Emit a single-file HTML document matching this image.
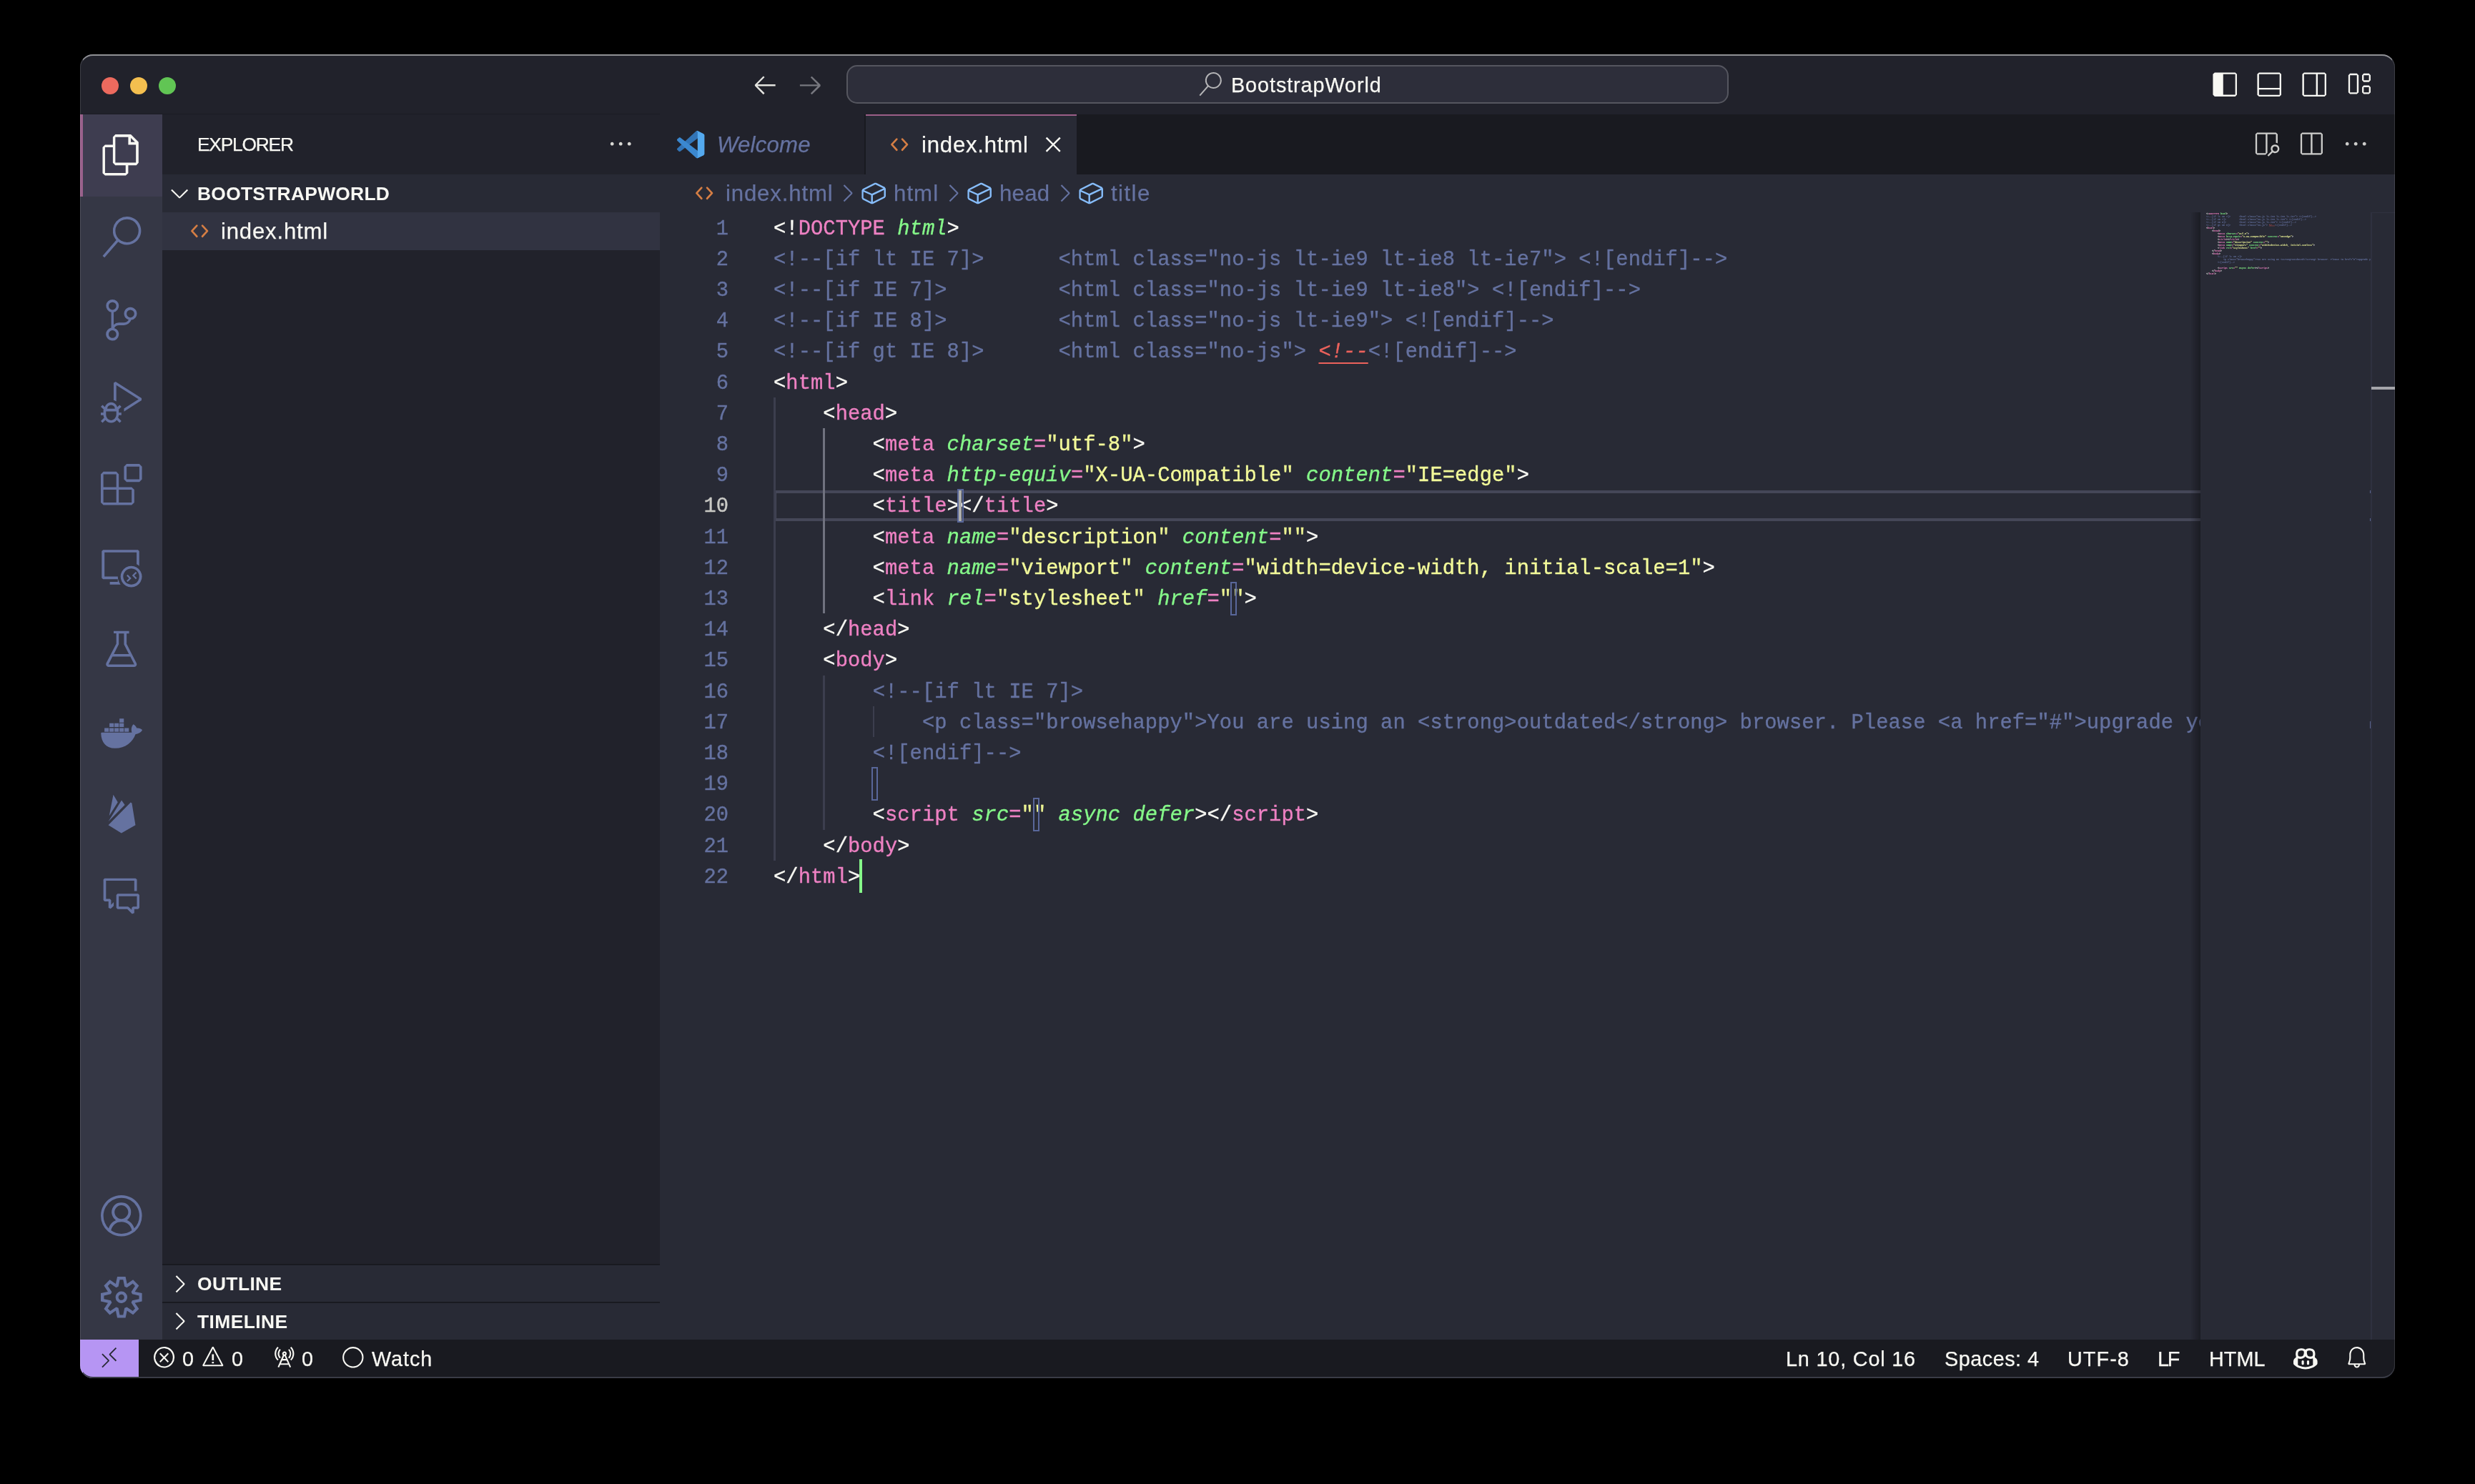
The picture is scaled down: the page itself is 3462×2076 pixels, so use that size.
<!DOCTYPE html>
<html><head><meta charset="utf-8"><title>index.html — BootstrapWorld</title>
<style>
html,body{margin:0;padding:0;background:#000;}
body{width:3462px;height:2076px;position:relative;overflow:hidden;font-family:"Liberation Sans",sans-serif;}
.t{position:absolute;white-space:pre;}
.t,.code,.ln{will-change:transform;}
.i{position:absolute;display:block;overflow:visible;}
.r{position:absolute;}
#win{position:absolute;left:112px;top:76px;width:3238px;height:1852px;border-radius:18px;overflow:hidden;background:#282A35;}
#win>*{margin-left:-112px;margin-top:-76px;}
#winborder{position:absolute;left:112px;top:76px;width:3238px;height:1852px;border-radius:18px;box-sizing:border-box;border:1px solid rgba(255,255,255,0.13);border-top:2px solid rgba(255,255,255,0.50);border-bottom:2px solid #3A3C46;pointer-events:none;}
.code,.ln{-webkit-text-stroke:0.35px currentColor;}
.code{position:absolute;white-space:pre;font-family:"Liberation Mono",monospace;font-size:28.8px;line-height:43.2px;height:43.2px;color:#F8F8F3;letter-spacing:0.047px;}
.code i{font-style:italic;}
.c{color:#6572A0}.p{color:#EE81C3}.g{color:#85F789;font-style:italic}.y{color:#F3FA9A}.q{color:#EBF292}
.e{color:#EC625C;font-style:italic;text-decoration:underline;text-decoration-thickness:2.4px;text-underline-offset:7px}
.ln{position:absolute;font-family:"Liberation Mono",monospace;font-size:28.8px;line-height:43.2px;color:#6572A0;text-align:right;width:100px;}
</style></head><body>
<div id="win">

<div class="r" style="left:112.0px;top:76.0px;width:3238.0px;height:84.0px;background:#21222B;"></div>
<div class="r" style="left:112.0px;top:160.0px;width:115.2px;height:1714.0px;background:#353745;"></div>
<div class="r" style="left:227.2px;top:160.0px;width:695.8px;height:1714.0px;background:#21222B;"></div>
<div class="r" style="left:923.0px;top:160.0px;width:2427.0px;height:84.0px;background:#191A20;"></div>
<div class="r" style="left:923.0px;top:244.0px;width:2427.0px;height:1630.0px;background:#282A35;"></div>
<div class="r" style="left:112.0px;top:1874.0px;width:3238.0px;height:53.0px;background:#191A20;"></div>
<div class="r" style="left:141.8px;top:108.0px;width:24.0px;height:24.0px;background:#EC6A5E;border-radius:50%;"></div>
<div class="r" style="left:181.8px;top:108.0px;width:24.0px;height:24.0px;background:#F4BF4F;border-radius:50%;"></div>
<div class="r" style="left:221.8px;top:108.0px;width:24.0px;height:24.0px;background:#61C554;border-radius:50%;"></div>
<svg class="i" style="left:1051.1px;top:99.3px;" width="38.4" height="38.4" viewBox="0 0 16 16"><path fill="#E4E4E0" fill-rule="evenodd" d="M6.99 3.09 2.03 8.11V8.8L6.99 13.81L7.73 13.07L3.57 8.96H14.03V7.95H3.57L7.73 3.79Z"/></svg>
<svg class="i" style="left:1113.6px;top:99.3px;" width="38.4" height="38.4" viewBox="0 0 16 16"><path fill="#77787F" fill-rule="evenodd" d="M9.01 13.87 14.03 8.91V8.16L9.01 3.2L8.27 3.89L12.43 8.05H2.03V9.01H12.43L8.27 13.17Z"/></svg>
<div class="r" style="left:1183.5px;top:90.8px;width:1234.0px;height:54.6px;background:#2D2E3A;box-sizing:border-box;border:2px solid #55565F;border-radius:15px;"></div>
<svg class="i" style="left:1676.3px;top:100.6px;" width="33.6" height="33.6" viewBox="0 0 16 16"><path fill="#B4B4B6" fill-rule="evenodd" d="M10.19 0Q8.53 0 7.17 0.88Q5.81 1.76 5.15 3.25Q4.48 4.75 4.72 6.35Q4.96 7.95 6.03 9.12L0.69 15.25L1.44 15.89L6.77 9.81Q8.21 10.93 10 10.99Q11.79 11.04 13.28 10.03Q14.77 9.01 15.36 7.31Q15.95 5.6 15.41 3.87Q14.88 2.13 13.41 1.07Q11.95 0 10.19 0ZM10.19 9.97Q8.96 9.97 7.92 9.39Q6.88 8.8 6.27 7.76Q5.65 6.72 5.65 5.49Q5.65 4.27 6.27 3.23Q6.88 2.19 7.92 1.6Q8.96 1.01 10.19 1.01Q11.41 1.01 12.43 1.6Q13.44 2.19 14.05 3.23Q14.67 4.27 14.67 5.49Q14.67 6.72 14.05 7.76Q13.44 8.8 12.43 9.41Q11.41 10.03 10.19 10.03Z"/></svg>
<div class="t" style="left:1721.8px;top:98.1px;font-size:28.8px;line-height:43.2px;color:#F8F8F3;letter-spacing:0.911px;-webkit-text-stroke:0.25px currentColor;">BootstrapWorld</div>
<svg class="i" style="left:3092.8px;top:98.5px;" width="38.4" height="38.4" viewBox="0 0 16 16"><path fill="#F8F8F3" fill-rule="evenodd" d="M2.03 1.01 1.01 1.97V13.97L2.03 14.99H14.03L14.99 13.97V1.97L14.03 1.01ZM14.03 13.97H6.99V1.97H14.03Z"/></svg>
<svg class="i" style="left:3155.2px;top:98.5px;" width="38.4" height="38.4" viewBox="0 0 16 16"><path fill="#F8F8F3" fill-rule="evenodd" d="M2.03 1.01 1.01 2.03V14.03L2.03 14.99H14.03L14.99 14.03V2.03L14.03 1.01ZM2.03 10.03V2.03H14.03V10.03ZM2.03 10.99H14.03V14.03H2.03Z"/></svg>
<svg class="i" style="left:3217.6px;top:98.5px;" width="38.4" height="38.4" viewBox="0 0 16 16"><path fill="#F8F8F3" fill-rule="evenodd" d="M2.03 1.01 1.01 2.03V14.03L2.03 14.99H14.03L14.99 14.03V2.03L14.03 1.01ZM2.03 14.03V2.03H9.01V14.03ZM10.03 14.03V2.03H14.03V14.03Z"/></svg>
<svg class="i" style="left:3280.1px;top:98.2px;" width="38.4" height="38.4" viewBox="0 0 16 16"><path fill="#F8F8F3" fill-rule="evenodd" d="M2.99 1.97 2.03 2.99V13.01L2.99 13.97H6.99L8 13.01V2.99L6.99 1.97ZM2.99 13.01V2.99H6.99V13.01ZM10.03 2.99 10.99 1.97H14.03L14.99 2.99V5.97L14.03 6.99H10.99L10.03 5.97ZM10.99 2.99V5.97H14.03V2.99ZM10.03 9.97 10.99 9.01H14.03L14.99 9.97V13.01L14.03 13.97H10.99L10.03 13.01ZM10.99 9.97V13.01H14.03V9.97Z"/></svg>
<div class="r" style="left:112.0px;top:159.0px;width:811.0px;height:1.0px;background:#1B1C24;"></div>
<div class="r" style="left:112.0px;top:160.0px;width:115.2px;height:115.2px;background:#3E3D50;"></div>
<div class="r" style="left:112.0px;top:160.0px;width:4.0px;height:115.2px;background:#99608B;"></div>
<svg class="i" style="left:140.8px;top:188.2px;" width="57.6" height="57.6" viewBox="0 0 16 16"><path fill="#F8F8F3" fill-rule="evenodd" d="M11.68 0H5.65L4.69 1.01V4H1.65L0.69 5.01V15.04L1.65 16H9.71L10.67 15.04V12H13.81L14.67 11.04V2.99ZM11.68 1.39 13.28 2.99H11.68ZM9.65 14.99H1.65V5.01H4.69V11.04L5.65 12H9.65ZM13.65 10.99H5.65V1.01H10.67V4H13.65Z"/></svg>
<svg class="i" style="left:140.8px;top:303.4px;" width="57.6" height="57.6" viewBox="0 0 16 16"><path fill="#6572A0" fill-rule="evenodd" d="M10.19 0Q8.53 0 7.17 0.88Q5.81 1.76 5.15 3.25Q4.48 4.75 4.72 6.35Q4.96 7.95 6.03 9.12L0.69 15.25L1.44 15.89L6.77 9.81Q8.21 10.93 10 10.99Q11.79 11.04 13.28 10.03Q14.77 9.01 15.36 7.31Q15.95 5.6 15.41 3.87Q14.88 2.13 13.41 1.07Q11.95 0 10.19 0ZM10.19 9.97Q8.96 9.97 7.92 9.39Q6.88 8.8 6.27 7.76Q5.65 6.72 5.65 5.49Q5.65 4.27 6.27 3.23Q6.88 2.19 7.92 1.6Q8.96 1.01 10.19 1.01Q11.41 1.01 12.43 1.6Q13.44 2.19 14.05 3.23Q14.67 4.27 14.67 5.49Q14.67 6.72 14.05 7.76Q13.44 8.8 12.43 9.41Q11.41 10.03 10.19 10.03Z"/></svg>
<svg class="i" style="left:140.8px;top:418.6px;" width="57.6" height="57.6" viewBox="0 0 16 16"><path fill="#6572A0" fill-rule="evenodd" d="M14.03 5.49Q14.03 4.8 13.65 4.19Q13.28 3.57 12.64 3.25Q12 2.93 11.31 2.99Q10.61 3.04 10.03 3.47Q9.44 3.89 9.2 4.56Q8.96 5.23 9.07 5.92Q9.17 6.61 9.65 7.12Q10.13 7.63 10.83 7.84Q10.56 8.37 10.08 8.67Q9.6 8.96 9.01 8.96H7.04Q5.87 8.96 5.01 9.76V4.91Q5.97 4.75 6.53 3.97Q7.09 3.2 7.01 2.24Q6.93 1.28 6.21 0.64Q5.49 0 4.53 0Q3.57 0 2.85 0.64Q2.13 1.28 2.05 2.24Q1.97 3.2 2.53 3.97Q3.09 4.75 4.05 4.91V10.99Q3.09 11.2 2.51 11.95Q1.92 12.69 2 13.65Q2.08 14.61 2.75 15.28Q3.41 15.95 4.37 16Q5.33 16.05 6.08 15.47Q6.83 14.88 6.99 13.92Q7.15 12.96 6.67 12.16Q6.19 11.36 5.23 11.09Q5.49 10.56 5.97 10.27Q6.45 9.97 7.04 9.97H9.01Q9.97 9.97 10.75 9.41Q11.52 8.85 11.84 7.95Q12.75 7.84 13.39 7.12Q14.03 6.4 14.03 5.49ZM3.04 2.51Q3.04 1.87 3.47 1.44Q3.89 1.01 4.53 1.01Q5.17 1.01 5.6 1.44Q6.03 1.87 6.03 2.48Q6.03 3.09 5.6 3.55Q5.17 4 4.53 4Q3.89 4 3.47 3.55Q3.04 3.09 3.04 2.51ZM6.03 13.44Q6.03 14.08 5.6 14.51Q5.17 14.93 4.53 14.93Q3.89 14.93 3.47 14.51Q3.04 14.08 3.04 13.47Q3.04 12.85 3.47 12.4Q3.89 11.95 4.53 11.95Q5.17 11.95 5.6 12.4Q6.03 12.85 6.03 13.44ZM11.52 6.99Q10.88 6.99 10.45 6.53Q10.03 6.08 10.03 5.47Q10.03 4.85 10.45 4.43Q10.88 4 11.49 4Q12.11 4 12.56 4.43Q13.01 4.85 13.01 5.47Q13.01 6.08 12.56 6.53Q12.11 6.99 11.52 6.99Z"/></svg>
<svg class="i" style="left:140.8px;top:533.8px;" width="57.6" height="57.6" viewBox="0 0 16 16"><path fill="#6572A0" fill-rule="evenodd" d="M7.31 9.01 6.4 9.87Q6.19 9.07 5.52 8.53Q4.85 8 4 8Q3.15 8 2.48 8.53Q1.81 9.07 1.6 9.87L0.69 9.01L0 9.71L1.17 10.83L1.01 10.99V12H0V13.01H1.01V13.07Q1.07 13.55 1.28 14.03L0 15.31L0.69 16L1.81 14.88Q2.19 15.41 2.77 15.71Q3.36 16 4 16Q4.64 16 5.23 15.71Q5.81 15.41 6.19 14.88L7.31 16L8 15.31L6.72 13.97Q6.93 13.55 6.99 13.01V12.96H8V12H6.99V10.99L6.88 10.83L8 9.71ZM4 9.01Q4.64 9.01 5.07 9.44Q5.49 9.87 5.49 10.51H2.51Q2.51 9.87 2.93 9.44Q3.36 9.01 4 9.01ZM6.03 13.01Q5.92 13.81 5.36 14.37Q4.8 14.93 4 14.99Q3.2 14.93 2.64 14.37Q2.08 13.81 2.03 13.01V11.52H6.03ZM15.84 6.4V7.25L9.01 11.57V10.4L14.67 6.83L6.03 1.33V7.63Q5.55 7.31 5.01 7.15V0.43L5.76 0Z"/></svg>
<svg class="i" style="left:140.8px;top:649.0px;" width="57.6" height="57.6" viewBox="0 0 16 16"><path fill="#6572A0" fill-rule="evenodd" d="M9.01 1.01 10.03 0H14.99L16 1.01V5.97L14.99 6.99H10.03L9.01 5.97ZM10.03 1.01V5.97H14.99V1.01ZM0 9.97V4L1.01 2.99H6.03L6.99 4V9.01H12L13.01 9.97V14.99L12 16H1.01L0 14.99ZM6.03 9.01V4H1.01V9.01ZM6.03 9.97H1.01V14.99H6.03ZM6.99 14.99H12V9.97H6.99Z"/></svg>
<svg class="i" style="left:140.8px;top:764.2px;" width="57.6" height="57.6" viewBox="0 0 16 16"><path fill="#6572A0" fill-rule="evenodd" d="M0.91 1.44H14.45L14.93 1.92V7.68Q14.45 7.31 13.92 7.04V2.45H1.44V11.84H6.61Q6.61 13.55 7.68 14.93H3.52V13.92H6.61V12.85H0.91L0.37 12.37V1.92ZM11.84 7.68Q10.72 7.68 9.76 8.24Q8.8 8.8 8.24 9.76Q7.68 10.72 7.68 11.84Q7.68 12.96 8.24 13.92Q8.8 14.88 9.76 15.44Q10.72 16 11.84 16Q12.96 16 13.92 15.44Q14.88 14.88 15.44 13.92Q16 12.96 16 11.84Q16 10.72 15.44 9.76Q14.88 8.8 13.92 8.24Q12.96 7.68 11.84 7.68ZM11.84 14.93Q10.99 14.93 10.27 14.53Q9.55 14.13 9.12 13.41Q8.69 12.69 8.69 11.84Q8.69 10.99 9.12 10.27Q9.55 9.55 10.27 9.12Q10.99 8.69 11.84 8.69Q12.69 8.69 13.41 9.12Q14.13 9.55 14.53 10.27Q14.93 10.99 14.93 11.84Q14.93 12.69 14.53 13.41Q14.13 14.13 13.41 14.53Q12.69 14.93 11.84 14.93ZM13.55 12.85 12.16 11.41 13.55 9.97 14.03 10.45 13.01 11.41 14.03 12.43ZM10.03 11.52 10.99 12.48 10.03 13.49 10.45 13.92 11.89 12.48 10.45 11.04Z"/></svg>
<svg class="i" style="left:140.8px;top:879.4px;" width="57.6" height="57.6" viewBox="0 0 16 16"><path fill="#6572A0" fill-rule="evenodd" d="M13.87 13.55 10.03 6.03V2.03H10.99V1.01H5.01V1.97H6.03V5.97L2.08 13.55Q1.87 14.08 2.16 14.53Q2.45 14.99 2.99 14.99H13.01Q13.55 14.99 13.84 14.53Q14.13 14.08 13.87 13.55ZM6.88 6.4 6.99 6.19V2.03H9.01V6.24L10.93 10.03H5.07ZM2.99 14.03 4.53 10.99H11.47L13.01 14.03Z"/></svg>
<svg class="i" style="left:140.8px;top:994.6px;" width="57.6" height="57.6" viewBox="0 0 24 24"><path fill="#6572A0" fill-rule="evenodd" d="M0.1 12.9Q0.1 12.4 0.6 12.4H18.1C17.6 11 17.7 8.9 19 7.6C20 8.2 20.7 9 20.9 9.8C22 9.6 23.4 10 24.2 10.9C23.6 12 22.3 13 20.2 13.4C18.6 17.8 14.6 21.6 8.2 21.6C3 21.6 0.3 18 0.1 12.9ZM2.13 9.8h2.55v2.2h-2.55ZM5.05 9.8h2.55v2.2h-2.55ZM7.97 9.8h2.55v2.2h-2.55ZM10.89 9.8h2.55v2.2h-2.55ZM13.81 9.8h2.55v2.2h-2.55ZM5.05 6.98h2.55v2.2h-2.55ZM7.97 6.98h2.55v2.2h-2.55ZM10.89 6.98h2.55v2.2h-2.55ZM10.89 4.3h2.55v2.25h-2.55Z"/></svg>
<svg class="i" style="left:140.8px;top:1109.8px;" width="57.6" height="57.6" viewBox="0 0 24 24"><path fill="#6572A0" fill-rule="evenodd" d="M7.3 0.7 9.9 5.1 4.9 13ZM4.4 16.4 12.1 4 14 6.7ZM4.4 18.4 17.4 5.2 18.1 5.6 20.2 18.4 12 23.1Z"/></svg>
<svg class="i" style="left:140.8px;top:1225.0px;" width="57.6" height="57.6" viewBox="0 0 16 16"><path fill="#6572A0" fill-rule="evenodd" d="M4 11.31 5.01 10.29V11.73L3.84 12.85L2.99 12.48V9.97H1.49L1.01 9.49V1.49L1.49 1.01H13.49L14.03 1.49V5.97H13.01V1.97H2.03V9.01H3.52L4 9.49ZM10.29 13.01 12.16 14.83 13.01 14.51V13.01H14.51L14.99 12.48V7.52L14.51 6.99H6.51L6.03 7.52V12.48L6.51 13.01ZM10.51 12H6.99V8H14.03V12H12.48L12 12.48V13.28L10.83 12.16Z"/></svg>
<svg class="i" style="left:140.8px;top:1672.4px;" width="57.6" height="57.6" viewBox="0 0 16 16"><path fill="#6572A0" fill-rule="evenodd" d="M16 8Q16 5.81 14.93 3.97Q13.87 2.13 12.03 1.07Q10.19 0 8 0Q5.81 0 3.97 1.07Q2.13 2.13 1.07 3.97Q0 5.81 0 8Q0 9.76 0.75 11.36Q1.49 12.96 2.83 14.08L3.52 14.61Q5.55 16 8 16Q10.45 16 12.48 14.61L13.23 14.08Q14.51 12.96 15.25 11.36Q16 9.76 16 8ZM8 14.99Q5.81 14.99 4 13.71L4.05 13.33Q4.21 12.8 4.48 12.35Q4.75 11.89 5.12 11.52Q5.49 11.15 5.92 10.88Q6.35 10.61 6.91 10.48Q7.47 10.35 8 10.35Q8.8 10.35 9.57 10.64Q10.35 10.93 10.91 11.49Q11.47 12.05 11.79 12.8Q11.95 13.23 12.05 13.71Q10.24 14.99 8 14.99ZM5.55 7.57Q5.33 7.09 5.33 6.56Q5.33 6.03 5.55 5.55Q5.76 5.07 6.11 4.72Q6.45 4.37 6.93 4.13Q7.41 3.89 8 3.89Q8.59 3.89 9.04 4.11Q9.49 4.32 9.87 4.69Q10.24 5.07 10.45 5.55Q10.67 6.03 10.67 6.59Q10.67 7.15 10.45 7.6Q10.24 8.05 9.87 8.43Q9.49 8.8 9.01 9.01Q8 9.44 6.93 9.01Q6.51 8.8 6.13 8.43Q5.76 8.05 5.55 7.57ZM12.96 12.91Q12.96 12.91 12.96 12.85V12.8Q12.75 12.05 12.29 11.41Q11.84 10.77 11.2 10.29Q10.72 9.92 10.13 9.65Q10.4 9.49 10.61 9.28Q10.99 8.91 11.25 8.48Q11.79 7.63 11.73 6.56Q11.79 5.81 11.49 5.12Q11.2 4.43 10.67 3.89Q10.13 3.36 9.44 3.09Q8.75 2.83 7.97 2.83Q7.2 2.83 6.51 3.09Q5.81 3.36 5.31 3.89Q4.8 4.43 4.51 5.12Q4.21 5.81 4.21 6.56Q4.21 7.09 4.37 7.6Q4.53 8.11 4.75 8.48Q4.96 8.85 5.39 9.28Q5.6 9.49 5.87 9.71Q5.33 9.92 4.85 10.29Q4.21 10.77 3.76 11.41Q3.31 12.05 3.04 12.85V12.91Q2.08 11.95 1.55 10.67Q1.01 9.39 1.01 8Q1.01 6.08 1.95 4.48Q2.88 2.88 4.48 1.95Q6.08 1.01 8 1.01Q9.92 1.01 11.52 1.95Q13.12 2.88 14.05 4.48Q14.99 6.08 14.99 8Q14.99 9.39 14.48 10.67Q13.97 11.95 12.96 12.91Z"/></svg>
<svg class="i" style="left:140.8px;top:1786.4px;" width="57.6" height="57.6" viewBox="0 0 16 16"><path fill="#6572A0" fill-rule="evenodd" d="M13.23 5.81 16 6.4V9.6L13.23 10.19L14.83 12.53L12.53 14.77L10.19 13.23L9.6 16H6.4L5.81 13.23L3.47 14.83L1.23 12.53L2.77 10.19L0 9.6V6.4L2.77 5.81L1.23 3.47L3.47 1.17L5.81 2.77L6.4 0H9.6L10.19 2.77L12.53 1.17L14.83 3.47ZM12.21 9.23 14.88 8.69V7.36L12.21 6.77L11.84 5.92L13.33 3.63L12.43 2.67L10.13 4.21L9.23 3.84L8.69 1.17H7.36L6.83 3.84L5.97 4.21L3.68 2.67L2.72 3.63L4.27 5.92L3.89 6.77L1.23 7.36V8.69L3.89 9.23L4.27 10.08L2.72 12.37L3.68 13.33L5.97 11.79L6.83 12.16L7.36 14.83H8.69L9.23 12.16L10.13 11.79L12.43 13.33L13.33 12.37L11.84 10.08ZM6.72 6.08Q7.31 5.71 8 5.71Q8.96 5.71 9.63 6.37Q10.29 7.04 10.29 8Q10.29 8.8 9.76 9.44Q9.23 10.08 8.43 10.24Q7.63 10.4 6.91 10.03Q6.19 9.65 5.89 8.88Q5.6 8.11 5.81 7.33Q6.03 6.56 6.72 6.08ZM7.36 8.96Q7.68 9.12 8 9.12Q8.48 9.12 8.8 8.8Q9.12 8.48 9.12 8.03Q9.12 7.57 8.88 7.28Q8.64 6.99 8.24 6.91Q7.84 6.83 7.47 7.01Q7.09 7.2 6.93 7.57Q6.77 7.95 6.91 8.35Q7.04 8.75 7.36 8.96Z"/></svg>
<div class="t" style="left:275.8px;top:183.4px;font-size:26.4px;line-height:39.6px;color:#F8F8F3;letter-spacing:-1.255px;-webkit-text-stroke:0.25px currentColor;">EXPLORER</div>
<svg class="i" style="left:849.0px;top:182.4px;" width="38.4" height="38.4" viewBox="0 0 16 16"><path fill="#D8D8D4" fill-rule="evenodd" d="M4 8Q4 8.43 3.71 8.72Q3.41 9.01 2.99 9.01Q2.56 9.01 2.29 8.72Q2.03 8.43 2.03 8Q2.03 7.57 2.29 7.28Q2.56 6.99 2.99 6.99Q3.41 6.99 3.71 7.28Q4 7.57 4 8ZM9.01 8Q9.01 8.43 8.72 8.72Q8.43 9.01 8 9.01Q7.57 9.01 7.28 8.72Q6.99 8.43 6.99 8Q6.99 7.57 7.28 7.28Q7.57 6.99 8 6.99Q8.43 6.99 8.72 7.28Q9.01 7.57 9.01 8ZM14.03 8Q14.03 8.43 13.73 8.72Q13.44 9.01 13.01 9.01Q12.59 9.01 12.29 8.72Q12 8.43 12 8Q12 7.57 12.29 7.28Q12.59 6.99 13.01 6.99Q13.44 6.99 13.73 7.28Q14.03 7.57 14.03 8Z"/></svg>
<div class="r" style="left:227.2px;top:244.0px;width:695.8px;height:52.8px;background:#282A35;"></div>
<svg class="i" style="left:231.8px;top:251.2px;" width="38.4" height="38.4" viewBox="0 0 16 16"><path fill="#F8F8F3" fill-rule="evenodd" d="M8 10.08 12.32 5.71 12.96 6.35 8.27 10.99H7.68L2.99 6.35L3.63 5.71Z"/></svg>
<div class="t" style="left:275.8px;top:251.8px;font-size:26.4px;line-height:39.6px;color:#F8F8F3;letter-spacing:0.273px;font-weight:700;">BOOTSTRAPWORLD</div>
<div class="r" style="left:227.2px;top:296.8px;width:695.8px;height:52.8px;background:#313341;"></div>
<svg class="i" style="left:259.8px;top:303.8px;" width="38.4" height="38.4" viewBox="0 0 16 16"><path fill="none" stroke="#D57E44" stroke-width="1.1" stroke-linejoin="round" stroke-linecap="round" d="M6.4 4.85 3.5 8 6.4 11.15M9.6 4.85 12.5 8 9.6 11.15"/></svg>
<div class="t" style="left:309.0px;top:301.0px;font-size:31.2px;line-height:46.8px;color:#F8F8F3;letter-spacing:0.789px;-webkit-text-stroke:0.25px currentColor;">index.html</div>
<div class="r" style="left:227.2px;top:1768.4px;width:695.8px;height:52.8px;background:#282A35;box-sizing:border-box;border-top:2.4px solid #191A20;"></div>
<svg class="i" style="left:232.3px;top:1776.6px;" width="38.4" height="38.4" viewBox="0 0 16 16"><path fill="#F8F8F3" fill-rule="evenodd" d="M10.08 8 5.71 3.68 6.35 3.04 10.99 7.73V8.32L6.35 13.01L5.71 12.37Z"/></svg>
<div class="t" style="left:276.4px;top:1777.2px;font-size:26.4px;line-height:39.6px;color:#F8F8F3;letter-spacing:0.390px;font-weight:700;">OUTLINE</div>
<div class="r" style="left:227.2px;top:1821.2px;width:695.8px;height:52.8px;background:#282A35;box-sizing:border-box;border-top:2.4px solid #191A20;"></div>
<svg class="i" style="left:232.3px;top:1829.4px;" width="38.4" height="38.4" viewBox="0 0 16 16"><path fill="#F8F8F3" fill-rule="evenodd" d="M10.08 8 5.71 3.68 6.35 3.04 10.99 7.73V8.32L6.35 13.01L5.71 12.37Z"/></svg>
<div class="t" style="left:276.4px;top:1830.0px;font-size:26.4px;line-height:39.6px;color:#F8F8F3;letter-spacing:0.429px;font-weight:700;">TIMELINE</div>
<div class="r" style="left:923.0px;top:160.0px;width:288.0px;height:84.0px;background:#21222B;"></div>
<div class="r" style="left:1208.6px;top:160.0px;width:2.4px;height:84.0px;background:#191A20;"></div>
<svg class="i" style="left:946.8px;top:182.7px" width="38.4" height="38.4" viewBox="0 0 100 100"><path fill="#3274B6" d="M96.4614 10.7962L75.8569 0.875542C73.4719 -0.272773 70.6217 0.211611 68.75 2.08333L1.29858 63.5832C-0.515693 65.2373 -0.513607 68.0937 1.30308 69.7452L6.81272 74.754C8.29793 76.1042 10.5347 76.2036 12.1338 74.9905L93.3609 13.3699C96.086 11.3026 100 13.2462 100 16.6667V16.4275C100 14.0265 98.6246 11.8378 96.4614 10.7962Z"/><path fill="#3B88D0" d="M96.4614 89.2038L75.8569 99.1245C73.4719 100.273 70.6217 99.7884 68.75 97.9167L1.29858 36.4169C-0.515693 34.7627 -0.513607 31.9063 1.30308 30.2548L6.81272 25.246C8.29793 23.8958 10.5347 23.7964 12.1338 25.0095L93.3609 86.6301C96.086 88.6974 100 86.7538 100 83.3334V83.5726C100 85.9735 98.6246 88.1622 96.4614 89.2038Z"/><path fill="#54A9EE" d="M75.8578 99.1263C73.4721 100.274 70.6219 99.7885 68.75 97.9166C71.0564 100.223 75 98.5895 75 95.3278V4.67213C75 1.41039 71.0564 -0.223106 68.75 2.08329C70.6219 0.211402 73.4721 -0.273666 75.8578 0.873633L96.4587 10.7807C98.6234 11.8217 100 14.0112 100 16.4132V83.5871C100 85.9891 98.6234 88.1786 96.4586 89.2196L75.8578 99.1263Z"/></svg>
<div class="t" style="left:1002.8px;top:179.8px;font-size:31.2px;line-height:46.8px;color:#6572A0;letter-spacing:0.190px;-webkit-text-stroke:0.25px currentColor;font-style:italic;">Welcome</div>
<div class="r" style="left:1211.0px;top:160.0px;width:295.0px;height:84.0px;background:#282A35;"></div>
<div class="r" style="left:1211.0px;top:160.0px;width:295.0px;height:2.4px;background:#9B5E87;"></div>
<svg class="i" style="left:1239.3px;top:182.8px;" width="38.4" height="38.4" viewBox="0 0 16 16"><path fill="none" stroke="#D57E44" stroke-width="1.1" stroke-linejoin="round" stroke-linecap="round" d="M6.4 4.85 3.5 8 6.4 11.15M9.6 4.85 12.5 8 9.6 11.15"/></svg>
<div class="t" style="left:1288.6px;top:179.8px;font-size:31.2px;line-height:46.8px;color:#F8F8F3;letter-spacing:0.756px;-webkit-text-stroke:0.25px currentColor;">index.html</div>
<svg class="i" style="left:1453.6px;top:182.8px;" width="38.4" height="38.4" viewBox="0 0 16 16"><path fill="#F8F8F3" fill-rule="evenodd" d="M8 8.69 11.63 12.37 12.37 11.63 8.69 8 12.37 4.37 11.63 3.63 8 7.31 4.37 3.63 3.63 4.37 7.31 8 3.63 11.63 4.37 12.37Z"/></svg>
<svg class="i" style="left:3150.2px;top:182.9px;" width="38.4" height="38.4" viewBox="0 0 16 16"><path fill="#CDCDCB" fill-rule="evenodd" d="M2.99 1.01H14.03L14.99 1.97V7.31Q14.51 7.09 13.97 6.99V1.97H9.01V12.85L7.89 13.97H2.99L2.03 13.01V1.97ZM2.99 13.01H8V1.97H2.99ZM13.39 8Q12.75 8 12.21 8.37H12.16Q11.25 8.91 11.01 9.95Q10.77 10.99 11.36 11.89L9.01 14.24L9.71 14.93L12.05 12.59Q12.53 12.91 13.15 12.99Q13.76 13.07 14.32 12.85Q14.88 12.64 15.28 12.21Q15.68 11.79 15.87 11.23Q16.05 10.67 15.95 10.08Q15.84 9.49 15.49 9.01Q15.15 8.53 14.59 8.27Q14.03 8 13.39 8ZM13.6 12Q13.07 12.05 12.67 11.76Q12.27 11.47 12.08 11.07Q11.89 10.67 12 10.21Q12.11 9.76 12.43 9.44Q12.75 9.12 13.17 9.04Q13.6 8.96 14.03 9.12Q14.45 9.28 14.69 9.63Q14.93 9.97 14.96 10.37Q14.99 10.77 14.83 11.15Q14.67 11.52 14.35 11.73Q14.03 11.95 13.6 12Z"/></svg>
<svg class="i" style="left:3213.1px;top:182.9px;" width="38.4" height="38.4" viewBox="0 0 16 16"><path fill="#CDCDCB" fill-rule="evenodd" d="M14.03 1.01H2.99L2.03 1.97V13.01L2.99 13.97H14.03L14.99 13.01V1.97ZM8 13.01H2.99V1.97H8ZM14.03 13.01H9.01V1.97H14.03Z"/></svg>
<svg class="i" style="left:3275.5px;top:181.8px;" width="38.4" height="38.4" viewBox="0 0 16 16"><path fill="#CDCDCB" fill-rule="evenodd" d="M4 8Q4 8.43 3.71 8.72Q3.41 9.01 2.99 9.01Q2.56 9.01 2.29 8.72Q2.03 8.43 2.03 8Q2.03 7.57 2.29 7.28Q2.56 6.99 2.99 6.99Q3.41 6.99 3.71 7.28Q4 7.57 4 8ZM9.01 8Q9.01 8.43 8.72 8.72Q8.43 9.01 8 9.01Q7.57 9.01 7.28 8.72Q6.99 8.43 6.99 8Q6.99 7.57 7.28 7.28Q7.57 6.99 8 6.99Q8.43 6.99 8.72 7.28Q9.01 7.57 9.01 8ZM14.03 8Q14.03 8.43 13.73 8.72Q13.44 9.01 13.01 9.01Q12.59 9.01 12.29 8.72Q12 8.43 12 8Q12 7.57 12.29 7.28Q12.59 6.99 13.01 6.99Q13.44 6.99 13.73 7.28Q14.03 7.57 14.03 8Z"/></svg>
<svg class="i" style="left:965.6px;top:251.2px;" width="38.4" height="38.4" viewBox="0 0 16 16"><path fill="none" stroke="#D57E44" stroke-width="1.1" stroke-linejoin="round" stroke-linecap="round" d="M6.4 4.85 3.5 8 6.4 11.15M9.6 4.85 12.5 8 9.6 11.15"/></svg>
<div class="t" style="left:1014.7px;top:248.2px;font-size:31.2px;line-height:46.8px;color:#6572A0;letter-spacing:0.833px;-webkit-text-stroke:0.25px currentColor;">index.html</div>
<svg class="i" style="left:1166.3px;top:251.2px;" width="38.4" height="38.4" viewBox="0 0 16 16"><path fill="#6572A0" fill-rule="evenodd" d="M10.08 8 5.71 3.68 6.35 3.04 10.99 7.73V8.32L6.35 13.01L5.71 12.37Z"/></svg>
<svg class="i" style="left:1203.2px;top:251.2px;" width="38.4" height="38.4" viewBox="0 0 16 16"><path fill="#86BCF9" fill-rule="evenodd" d="M14.45 4.48 9.44 1.97H8.53L1.55 5.49L1.01 6.4V10.88L1.55 11.79L6.56 14.29H7.47L14.45 10.77L14.99 9.87V5.39ZM6.45 13.12 1.97 10.88V7.15L6.45 9.17ZM6.93 8.32 2.29 6.24 8.96 2.88 13.6 5.23ZM13.97 9.87 7.47 13.12V9.23L13.97 6.19Z"/></svg>
<div class="t" style="left:1250.0px;top:248.2px;font-size:31.2px;line-height:46.8px;color:#6572A0;letter-spacing:1.053px;-webkit-text-stroke:0.25px currentColor;">html</div>
<svg class="i" style="left:1314.3px;top:251.2px;" width="38.4" height="38.4" viewBox="0 0 16 16"><path fill="#6572A0" fill-rule="evenodd" d="M10.08 8 5.71 3.68 6.35 3.04 10.99 7.73V8.32L6.35 13.01L5.71 12.37Z"/></svg>
<svg class="i" style="left:1351.2px;top:251.2px;" width="38.4" height="38.4" viewBox="0 0 16 16"><path fill="#86BCF9" fill-rule="evenodd" d="M14.45 4.48 9.44 1.97H8.53L1.55 5.49L1.01 6.4V10.88L1.55 11.79L6.56 14.29H7.47L14.45 10.77L14.99 9.87V5.39ZM6.45 13.12 1.97 10.88V7.15L6.45 9.17ZM6.93 8.32 2.29 6.24 8.96 2.88 13.6 5.23ZM13.97 9.87 7.47 13.12V9.23L13.97 6.19Z"/></svg>
<div class="t" style="left:1397.7px;top:248.2px;font-size:31.2px;line-height:46.8px;color:#6572A0;letter-spacing:0.264px;-webkit-text-stroke:0.25px currentColor;">head</div>
<svg class="i" style="left:1469.5px;top:251.2px;" width="38.4" height="38.4" viewBox="0 0 16 16"><path fill="#6572A0" fill-rule="evenodd" d="M10.08 8 5.71 3.68 6.35 3.04 10.99 7.73V8.32L6.35 13.01L5.71 12.37Z"/></svg>
<svg class="i" style="left:1507.0px;top:251.2px;" width="38.4" height="38.4" viewBox="0 0 16 16"><path fill="#86BCF9" fill-rule="evenodd" d="M14.45 4.48 9.44 1.97H8.53L1.55 5.49L1.01 6.4V10.88L1.55 11.79L6.56 14.29H7.47L14.45 10.77L14.99 9.87V5.39ZM6.45 13.12 1.97 10.88V7.15L6.45 9.17ZM6.93 8.32 2.29 6.24 8.96 2.88 13.6 5.23ZM13.97 9.87 7.47 13.12V9.23L13.97 6.19Z"/></svg>
<div class="t" style="left:1553.5px;top:248.2px;font-size:31.2px;line-height:46.8px;color:#6572A0;letter-spacing:1.437px;-webkit-text-stroke:0.25px currentColor;">title</div>
<div class="r" style="left:1082.0px;top:685.9px;width:1996.0px;height:43.2px;background:transparent;box-sizing:border-box;border:4px solid #454758;border-right:none;"></div>
<div class="r" style="left:1082.3px;top:556.0px;width:2.4px;height:648.0px;background:#3C3E4E;"></div>
<div class="r" style="left:1151.2px;top:599.2px;width:2.4px;height:259.2px;background:#70727F;"></div>
<div class="r" style="left:1151.2px;top:944.8px;width:2.4px;height:216.0px;background:#3C3E4E;"></div>
<div class="r" style="left:1220.7px;top:988.0px;width:2.4px;height:43.2px;background:#3C3E4E;"></div>
<div class="r" style="left:923px;top:296.8px;width:2155px;height:1577.2px;overflow:hidden;">
<div class="ln" style="left:-4.5px;top:1.8px;color:#6572A0">1</div>
<div class="code" style="left:158.7px;top:1.8px">&lt;!<span class="p">DOCTYPE</span> <span class="g">html</span>&gt;</div>
<div class="ln" style="left:-4.5px;top:45.0px;color:#6572A0">2</div>
<div class="code" style="left:158.7px;top:45.0px"><span class="c">&lt;!--[if lt IE 7]&gt;      &lt;html class=&quot;no-js lt-ie9 lt-ie8 lt-ie7&quot;&gt; &lt;![endif]--&gt;</span></div>
<div class="ln" style="left:-4.5px;top:88.2px;color:#6572A0">3</div>
<div class="code" style="left:158.7px;top:88.2px"><span class="c">&lt;!--[if IE 7]&gt;         &lt;html class=&quot;no-js lt-ie9 lt-ie8&quot;&gt; &lt;![endif]--&gt;</span></div>
<div class="ln" style="left:-4.5px;top:131.4px;color:#6572A0">4</div>
<div class="code" style="left:158.7px;top:131.4px"><span class="c">&lt;!--[if IE 8]&gt;         &lt;html class=&quot;no-js lt-ie9&quot;&gt; &lt;![endif]--&gt;</span></div>
<div class="ln" style="left:-4.5px;top:174.6px;color:#6572A0">5</div>
<div class="code" style="left:158.7px;top:174.6px"><span class="c">&lt;!--[if gt IE 8]&gt;      &lt;html class=&quot;no-js&quot;&gt; </span><span class="e">&lt;!--</span><span class="c">&lt;![endif]--&gt;</span></div>
<div class="ln" style="left:-4.5px;top:217.8px;color:#6572A0">6</div>
<div class="code" style="left:158.7px;top:217.8px">&lt;<span class="p">html</span>&gt;</div>
<div class="ln" style="left:-4.5px;top:261.0px;color:#6572A0">7</div>
<div class="code" style="left:158.7px;top:261.0px">    &lt;<span class="p">head</span>&gt;</div>
<div class="ln" style="left:-4.5px;top:304.2px;color:#6572A0">8</div>
<div class="code" style="left:158.7px;top:304.2px">        &lt;<span class="p">meta</span> <span class="g">charset</span><span class="p">=</span><span class="q">&quot;</span><span class="y">utf-8</span><span class="q">&quot;</span>&gt;</div>
<div class="ln" style="left:-4.5px;top:347.4px;color:#6572A0">9</div>
<div class="code" style="left:158.7px;top:347.4px">        &lt;<span class="p">meta</span> <span class="g">http-equiv</span><span class="p">=</span><span class="q">&quot;</span><span class="y">X-UA-Compatible</span><span class="q">&quot;</span> <span class="g">content</span><span class="p">=</span><span class="q">&quot;</span><span class="y">IE=edge</span><span class="q">&quot;</span>&gt;</div>
<div class="ln" style="left:-4.5px;top:390.6px;color:#C9C9C5">10</div>
<div class="code" style="left:158.7px;top:390.6px">        &lt;<span class="p">title</span>&gt;&lt;/<span class="p">title</span>&gt;</div>
<div class="ln" style="left:-4.5px;top:433.8px;color:#6572A0">11</div>
<div class="code" style="left:158.7px;top:433.8px">        &lt;<span class="p">meta</span> <span class="g">name</span><span class="p">=</span><span class="q">&quot;</span><span class="y">description</span><span class="q">&quot;</span> <span class="g">content</span><span class="p">=</span><span class="q">&quot;</span><span class="y"></span><span class="q">&quot;</span>&gt;</div>
<div class="ln" style="left:-4.5px;top:477.0px;color:#6572A0">12</div>
<div class="code" style="left:158.7px;top:477.0px">        &lt;<span class="p">meta</span> <span class="g">name</span><span class="p">=</span><span class="q">&quot;</span><span class="y">viewport</span><span class="q">&quot;</span> <span class="g">content</span><span class="p">=</span><span class="q">&quot;</span><span class="y">width=device-width, initial-scale=1</span><span class="q">&quot;</span>&gt;</div>
<div class="ln" style="left:-4.5px;top:520.2px;color:#6572A0">13</div>
<div class="code" style="left:158.7px;top:520.2px">        &lt;<span class="p">link</span> <span class="g">rel</span><span class="p">=</span><span class="q">&quot;</span><span class="y">stylesheet</span><span class="q">&quot;</span> <span class="g">href</span><span class="p">=</span><span class="q">&quot;</span><span class="y"></span><span class="q">&quot;</span>&gt;</div>
<div class="ln" style="left:-4.5px;top:563.4px;color:#6572A0">14</div>
<div class="code" style="left:158.7px;top:563.4px">    &lt;/<span class="p">head</span>&gt;</div>
<div class="ln" style="left:-4.5px;top:606.6px;color:#6572A0">15</div>
<div class="code" style="left:158.7px;top:606.6px">    &lt;<span class="p">body</span>&gt;</div>
<div class="ln" style="left:-4.5px;top:649.8px;color:#6572A0">16</div>
<div class="code" style="left:158.7px;top:649.8px">        <span class="c">&lt;!--[if lt IE 7]&gt;</span></div>
<div class="ln" style="left:-4.5px;top:693.0px;color:#6572A0">17</div>
<div class="code" style="left:158.7px;top:693.0px">            <span class="c">&lt;p class=&quot;browsehappy&quot;&gt;You are using an &lt;strong&gt;outdated&lt;/strong&gt; browser. Please &lt;a href=&quot;#&quot;&gt;upgrade your browser&lt;/a&gt; to improve your experience.&lt;/p&gt;</span></div>
<div class="ln" style="left:-4.5px;top:736.2px;color:#6572A0">18</div>
<div class="code" style="left:158.7px;top:736.2px">        <span class="c">&lt;![endif]--&gt;</span></div>
<div class="ln" style="left:-4.5px;top:779.4px;color:#6572A0">19</div>
<div class="ln" style="left:-4.5px;top:822.6px;color:#6572A0">20</div>
<div class="code" style="left:158.7px;top:822.6px">        &lt;<span class="p">script</span> <span class="g">src</span><span class="p">=</span><span class="q">&quot;</span><span class="y"></span><span class="q">&quot;</span> <span class="g">async</span> <span class="g">defer</span>&gt;&lt;/<span class="p">script</span>&gt;</div>
<div class="ln" style="left:-4.5px;top:865.8px;color:#6572A0">21</div>
<div class="code" style="left:158.7px;top:865.8px">    &lt;/<span class="p">body</span>&gt;</div>
<div class="ln" style="left:-4.5px;top:909.0px;color:#6572A0">22</div>
<div class="code" style="left:158.7px;top:909.0px">&lt;/<span class="p">html</span>&gt;</div>
</div>
<div class="r" style="left:1720.8px;top:813.6px;width:9.1px;height:47.2px;background:transparent;box-sizing:border-box;border:2px solid #59679A;"></div>
<div class="r" style="left:1219.0px;top:1073.0px;width:9.1px;height:47.0px;background:transparent;box-sizing:border-box;border:2px solid #59679A;"></div>
<div class="r" style="left:1444.8px;top:1116.1px;width:9.1px;height:47.0px;background:transparent;box-sizing:border-box;border:2px solid #59679A;"></div>
<div class="r" style="left:1339.1px;top:684.2px;width:8.8px;height:46.4px;background:transparent;box-sizing:border-box;border:2px solid #59679A;"></div>
<div class="r" style="left:1340.9px;top:686.3px;width:4.6px;height:42.4px;background:#AEAFAD;"></div>
<div class="r" style="left:1201.8px;top:1202.2px;width:4.6px;height:47.0px;background:#85F789;"></div>
<div class="r" style="left:112.0px;top:1874.0px;width:81.6px;height:54.0px;background:#B695F3;"></div>
<svg class="i" style="left:135.7px;top:1882.9px;" width="33.6" height="33.6" viewBox="0 0 16 16"><path fill="#282A35" fill-rule="evenodd" d="M12.91 9.55 8.91 5.6 12.91 1.6 12.27 1.01 8 5.28V5.92L12.27 10.19ZM2.99 5.6 7.09 9.71 2.99 13.76 3.63 14.4 8 9.97V9.39L3.63 5.01Z"/></svg>
<svg class="i" style="left:212.7px;top:1882.1px;" width="33.6" height="33.6" viewBox="0 0 16 16"><path fill="#F8F8F3" fill-rule="evenodd" d="M8.59 1.01Q9.76 1.07 10.85 1.6Q11.95 2.13 12.8 2.99Q14.83 5.17 14.83 8.11Q14.83 10.4 13.23 12.48Q12.43 13.44 11.41 14.05Q10.4 14.67 9.23 14.88Q6.67 15.36 4.59 14.19Q3.52 13.6 2.72 12.69Q1.92 11.79 1.49 10.67Q1.07 9.55 0.99 8.32Q0.91 7.09 1.28 5.97Q2.08 3.52 4.11 2.19Q5.07 1.55 6.21 1.23Q7.36 0.91 8.59 1.01ZM9.12 13.92Q11.15 13.44 12.48 11.79Q13.81 9.97 13.71 8Q13.71 6.77 13.25 5.65Q12.8 4.53 12 3.68Q10.45 2.13 8.43 1.97Q7.41 1.92 6.4 2.16Q5.39 2.4 4.59 2.99Q2.88 4.27 2.27 6.35Q1.65 8.43 2.53 10.35Q3.41 12.27 5.23 13.28Q6.08 13.81 7.09 13.97Q8.11 14.13 9.12 13.92ZM7.89 7.52 10.29 5.01 10.99 5.71 8.59 8.21 10.99 10.72 10.29 11.41 7.89 8.91 5.49 11.41 4.8 10.72 7.2 8.21 4.8 5.71 5.49 5.01Z"/></svg>
<div class="t" style="left:255.3px;top:1880.0px;font-size:28.8px;line-height:43.2px;color:#F8F8F3;letter-spacing:-0.417px;-webkit-text-stroke:0.25px currentColor;">0</div>
<svg class="i" style="left:280.7px;top:1882.1px;" width="33.6" height="33.6" viewBox="0 0 16 16"><path fill="#F8F8F3" fill-rule="evenodd" d="M7.57 1.01H8.43L14.99 13.28L14.56 13.97H1.44L1.01 13.28ZM8 2.29 2.29 13.01H13.71ZM8.64 12V10.99H7.36V12ZM7.36 9.97V5.97H8.64V9.97Z"/></svg>
<div class="t" style="left:323.6px;top:1880.0px;font-size:28.8px;line-height:43.2px;color:#F8F8F3;-webkit-text-stroke:0.25px currentColor;">0</div>
<svg class="i" style="left:380.2px;top:1882.1px;" width="33.6" height="33.6" viewBox="0 0 16 16"><path fill="#F8F8F3" fill-rule="evenodd" d="M2.99 5.6Q2.99 4.48 3.41 3.47Q3.84 2.45 4.64 1.71L3.89 1.01Q2.99 1.92 2.48 3.09Q1.97 4.27 1.97 5.57Q1.97 6.88 2.48 8.05Q2.99 9.23 3.89 10.13L4.64 9.44Q3.84 8.69 3.41 7.68Q2.99 6.67 2.99 5.6ZM4.05 5.6Q4.05 6.45 4.4 7.28Q4.75 8.11 5.39 8.75L6.08 8.05Q5.6 7.57 5.33 6.93Q5.07 6.29 5.07 5.6Q5.07 4.91 5.33 4.27Q5.6 3.63 6.08 3.15L5.39 2.4Q4.75 3.04 4.4 3.87Q4.05 4.69 4.05 5.6ZM11.73 8.8 10.99 8.05Q11.52 7.57 11.79 6.93Q12.05 6.29 12.05 5.6Q12.05 4.91 11.79 4.27Q11.52 3.63 10.99 3.15L11.73 2.45Q12.32 3.09 12.67 3.92Q13.01 4.75 13.01 5.63Q13.01 6.51 12.67 7.33Q12.32 8.16 11.73 8.8ZM13.07 1.01 12.37 1.71Q13.12 2.45 13.55 3.47Q13.97 4.48 13.97 5.57Q13.97 6.67 13.55 7.68Q13.12 8.69 12.37 9.44L13.07 10.13Q13.97 9.23 14.48 8.05Q14.99 6.88 14.99 5.57Q14.99 4.27 14.48 3.09Q13.97 1.92 13.07 1.01ZM9.97 5.44Q10.03 5.97 9.76 6.4L9.49 6.61L12.91 14.35L12 14.77L11.25 13.01H5.71L4.91 14.77L4 14.35L7.41 6.61Q7.15 6.29 7.04 5.87Q6.93 5.44 7.12 5.01Q7.31 4.59 7.65 4.35Q8 4.11 8.4 4.08Q8.8 4.05 9.15 4.21Q9.49 4.37 9.73 4.69Q9.97 5.01 9.97 5.44ZM8.37 5.07Q8.27 5.12 8.16 5.23Q8.05 5.33 8.03 5.47Q8 5.6 8.05 5.73Q8.11 5.87 8.24 5.95Q8.37 6.03 8.53 6.03Q8.69 6.03 8.85 5.89Q9.01 5.76 9.01 5.57Q9.01 5.39 8.91 5.28Q8.8 5.17 8.67 5.12Q8.53 5.07 8.37 5.07ZM8.64 7.15H8.37L7.47 9.07H9.49ZM10.83 12.05 9.92 10.08H7.04L6.19 12.05Z"/></svg>
<div class="t" style="left:421.8px;top:1880.0px;font-size:28.8px;line-height:43.2px;color:#F8F8F3;-webkit-text-stroke:0.25px currentColor;">0</div>
<svg class="i" style="left:477.2px;top:1882.1px;" width="33.6" height="33.6" viewBox="0 0 16 16"><path fill="#F8F8F3" fill-rule="evenodd" d="M9.6 2.24Q8.8 1.97 8 1.97Q7.2 1.97 6.4 2.24Q5.65 2.4 4.96 2.83Q3.63 3.63 2.83 4.96Q2.4 5.65 2.19 6.43Q1.97 7.2 2 8.03Q2.03 8.85 2.19 9.6Q2.61 11.09 3.73 12.27Q4.32 12.8 4.99 13.2Q5.65 13.6 6.43 13.81Q7.2 14.03 8.03 14Q8.85 13.97 9.6 13.79Q10.35 13.6 11.04 13.17Q12.37 12.37 13.17 11.04Q13.6 10.35 13.76 9.6Q14.03 8.8 14 7.97Q13.97 7.15 13.76 6.4Q13.6 5.65 13.17 4.96Q12.8 4.32 12.21 3.79Q11.68 3.2 11.04 2.83Q10.35 2.4 9.6 2.24ZM14.03 11.52Q13.12 13.12 11.52 14.03Q10.72 14.51 9.84 14.75Q8.96 14.99 8 14.99Q7.04 14.99 6.16 14.75Q5.28 14.51 4.48 14.05Q3.68 13.6 3.04 12.96Q2.4 12.32 1.95 11.52Q1.49 10.72 1.25 9.84Q1.01 8.96 1.01 8Q1.01 7.04 1.25 6.16Q1.49 5.28 1.97 4.48Q2.88 2.88 4.48 1.97Q5.28 1.49 6.16 1.25Q7.04 1.01 8 1.01Q8.96 1.01 9.87 1.23Q11.63 1.76 12.93 3.07Q14.24 4.37 14.77 6.13Q14.99 7.04 14.99 8Q14.99 8.96 14.75 9.84Q14.51 10.72 14.03 11.52Z"/></svg>
<div class="t" style="left:520.0px;top:1880.0px;font-size:28.8px;line-height:43.2px;color:#F8F8F3;letter-spacing:0.962px;-webkit-text-stroke:0.25px currentColor;">Watch</div>
<div class="t" style="left:2497.8px;top:1880.0px;font-size:28.8px;line-height:43.2px;color:#F8F8F3;letter-spacing:0.815px;-webkit-text-stroke:0.25px currentColor;">Ln 10, Col 16</div>
<div class="t" style="left:2719.7px;top:1880.0px;font-size:28.8px;line-height:43.2px;color:#F8F8F3;letter-spacing:0.502px;-webkit-text-stroke:0.25px currentColor;">Spaces: 4</div>
<div class="t" style="left:2892.2px;top:1880.0px;font-size:28.8px;line-height:43.2px;color:#F8F8F3;letter-spacing:1.052px;-webkit-text-stroke:0.25px currentColor;">UTF-8</div>
<div class="t" style="left:3017.9px;top:1880.0px;font-size:28.8px;line-height:43.2px;color:#F8F8F3;letter-spacing:-2.310px;-webkit-text-stroke:0.25px currentColor;">LF</div>
<div class="t" style="left:3089.5px;top:1880.0px;font-size:28.8px;line-height:43.2px;color:#F8F8F3;letter-spacing:0.067px;-webkit-text-stroke:0.25px currentColor;">HTML</div>
<svg class="i" style="left:3207.9px;top:1882.1px;" width="33.6" height="33.6" viewBox="0 0 16 16"><path fill="#F8F8F3" fill-rule="evenodd" d="M6.24 9.97Q6.56 9.97 6.77 10.21Q6.99 10.45 6.99 10.77V12.27Q6.99 12.59 6.77 12.8Q6.56 13.01 6.24 13.01Q5.92 13.01 5.71 12.8Q5.49 12.59 5.49 12.27V10.77Q5.49 10.45 5.71 10.21Q5.92 9.97 6.24 9.97ZM10.51 10.77Q10.51 10.45 10.29 10.21Q10.08 9.97 9.76 9.97Q9.44 9.97 9.23 10.21Q9.01 10.45 9.01 10.77V12.27Q9.01 12.59 9.23 12.8Q9.44 13.01 9.76 13.01Q10.08 13.01 10.29 12.8Q10.51 12.59 10.51 12.27ZM7.84 2.77Q7.95 2.83 8 2.93L8.16 2.77Q9.07 1.76 11.09 2.03Q12.96 2.24 13.81 3.25Q14.51 4.16 14.51 5.76Q14.51 6.77 14.24 7.41L14.4 8.27H14.45Q15.2 8.64 15.6 9.31Q16 9.97 16 10.72V12Q16 12.27 15.84 12.59Q15.73 12.75 15.55 12.99Q15.36 13.23 14.99 13.49L14.4 13.92Q14.08 14.19 13.71 14.4Q13.07 14.77 12.37 15.04Q10.19 16 8 16Q5.81 16 3.63 15.04Q2.93 14.77 2.29 14.4Q1.92 14.19 1.6 13.92L1.01 13.49Q0.64 13.23 0.45 12.99Q0.27 12.75 0.16 12.59Q0 12.27 0 12V10.72Q0 9.97 0.4 9.31Q0.8 8.64 1.55 8.27H1.6L1.76 7.41Q1.49 6.77 1.49 5.76Q1.49 4.16 2.19 3.25Q3.04 2.24 4.91 2.03Q6.93 1.76 7.84 2.77ZM3.04 8.69 2.99 8.8V13.07L3.04 13.12Q3.57 13.44 4.21 13.71Q6.13 14.51 8 14.51Q9.87 14.51 11.79 13.71Q12.43 13.44 12.96 13.12L13.01 13.07V8.8L12.96 8.69Q12.32 9.01 11.25 9.01Q9.49 9.01 8.53 8Q8.21 7.68 8 7.25Q7.79 7.68 7.47 8Q6.51 9.01 4.75 9.01Q3.68 9.01 3.04 8.69ZM6.77 3.79Q6.35 3.36 5.07 3.49Q3.79 3.63 3.39 4.13Q2.99 4.64 2.99 5.71Q2.99 6.77 3.31 7.15Q3.63 7.52 4.75 7.52Q5.87 7.52 6.37 6.99Q6.88 6.45 6.99 5.39Q7.15 4.21 6.77 3.79ZM9.23 3.79Q8.85 4.21 9.01 5.39Q9.12 6.45 9.63 6.99Q10.13 7.52 11.25 7.52Q12.37 7.52 12.69 7.15Q13.01 6.77 13.01 5.71Q13.01 4.64 12.61 4.13Q12.21 3.63 10.93 3.49Q9.65 3.36 9.23 3.79Z"/></svg>
<svg class="i" style="left:3280.0px;top:1882.1px;" width="33.6" height="33.6" viewBox="0 0 16 16"><path fill="#F8F8F3" fill-rule="evenodd" d="M13.39 10.56Q13.01 9.44 13.01 8.21V6.19Q13.01 5.23 12.69 4.35Q12.37 3.47 11.73 2.75Q11.09 2.03 10.27 1.57Q9.44 1.12 8.48 1.01Q7.41 0.91 6.4 1.25Q5.39 1.6 4.61 2.32Q3.84 3.04 3.41 4Q2.99 4.96 2.99 6.03V8.21Q2.99 9.44 2.61 10.56L2.03 12.32L2.45 13.01H5.97Q5.97 13.81 6.56 14.4Q7.15 14.99 7.97 14.99Q8.8 14.99 9.39 14.4Q9.97 13.81 9.97 13.01H13.49L13.97 12.32ZM8.69 13.71Q8.37 14.03 7.97 14.03Q7.57 14.03 7.28 13.73Q6.99 13.44 6.99 13.01H8.96Q9.01 13.44 8.69 13.71ZM3.15 12 3.52 10.88Q4 9.6 4 8.21V6.03Q4 5.17 4.35 4.37Q4.69 3.57 5.31 3.01Q5.92 2.45 6.75 2.19Q7.57 1.92 8.37 2.03Q9.97 2.24 10.99 3.41Q11.47 4 11.73 4.72Q12 5.44 12 6.19V8.21Q12 9.6 12.43 10.93L12.8 12Z"/></svg>
<div class="r" style="left:3064.0px;top:296.8px;width:14.0px;height:1577.2px;background:transparent;background:linear-gradient(to right,rgba(0,0,0,0),rgba(0,0,0,0.32));"></div>
<div class="r" style="left:3078.0px;top:296.8px;width:272.0px;height:1577.2px;background:#282A35;"></div>
<div class="r" style="left:3316.4px;top:296.8px;width:1.2px;height:1577.2px;background:#2F3140;"></div>
<div class="r" style="left:3316.4px;top:296.8px;width:33.6px;height:1.2px;background:#2F3140;"></div>
<div class="r" style="left:3317.0px;top:541.0px;width:33.0px;height:4.0px;background:#A5A5AA;"></div>
<div class="r" style="left:3078px;top:296.8px;width:238px;height:120px;overflow:hidden;">
<div style="position:absolute;left:8.4px;top:0.2px;transform-origin:0 0;transform:scale(0.11543,0.09259);font-weight:700;opacity:.9">
<div class="code" style="left:0;top:0.0px">&lt;!<span class="p">DOCTYPE</span> <span class="g">html</span>&gt;</div>
<div class="code" style="left:0;top:43.2px"><span class="c">&lt;!--[if lt IE 7]&gt;      &lt;html class=&quot;no-js lt-ie9 lt-ie8 lt-ie7&quot;&gt; &lt;![endif]--&gt;</span></div>
<div class="code" style="left:0;top:86.4px"><span class="c">&lt;!--[if IE 7]&gt;         &lt;html class=&quot;no-js lt-ie9 lt-ie8&quot;&gt; &lt;![endif]--&gt;</span></div>
<div class="code" style="left:0;top:129.6px"><span class="c">&lt;!--[if IE 8]&gt;         &lt;html class=&quot;no-js lt-ie9&quot;&gt; &lt;![endif]--&gt;</span></div>
<div class="code" style="left:0;top:172.8px"><span class="c">&lt;!--[if gt IE 8]&gt;      &lt;html class=&quot;no-js&quot;&gt; </span><span class="e">&lt;!--</span><span class="c">&lt;![endif]--&gt;</span></div>
<div class="code" style="left:0;top:216.0px">&lt;<span class="p">html</span>&gt;</div>
<div class="code" style="left:0;top:259.2px">    &lt;<span class="p">head</span>&gt;</div>
<div class="code" style="left:0;top:302.4px">        &lt;<span class="p">meta</span> <span class="g">charset</span><span class="p">=</span><span class="q">&quot;</span><span class="y">utf-8</span><span class="q">&quot;</span>&gt;</div>
<div class="code" style="left:0;top:345.6px">        &lt;<span class="p">meta</span> <span class="g">http-equiv</span><span class="p">=</span><span class="q">&quot;</span><span class="y">X-UA-Compatible</span><span class="q">&quot;</span> <span class="g">content</span><span class="p">=</span><span class="q">&quot;</span><span class="y">IE=edge</span><span class="q">&quot;</span>&gt;</div>
<div class="code" style="left:0;top:388.8px">        &lt;<span class="p">title</span>&gt;&lt;/<span class="p">title</span>&gt;</div>
<div class="code" style="left:0;top:432.0px">        &lt;<span class="p">meta</span> <span class="g">name</span><span class="p">=</span><span class="q">&quot;</span><span class="y">description</span><span class="q">&quot;</span> <span class="g">content</span><span class="p">=</span><span class="q">&quot;</span><span class="y"></span><span class="q">&quot;</span>&gt;</div>
<div class="code" style="left:0;top:475.2px">        &lt;<span class="p">meta</span> <span class="g">name</span><span class="p">=</span><span class="q">&quot;</span><span class="y">viewport</span><span class="q">&quot;</span> <span class="g">content</span><span class="p">=</span><span class="q">&quot;</span><span class="y">width=device-width, initial-scale=1</span><span class="q">&quot;</span>&gt;</div>
<div class="code" style="left:0;top:518.4px">        &lt;<span class="p">link</span> <span class="g">rel</span><span class="p">=</span><span class="q">&quot;</span><span class="y">stylesheet</span><span class="q">&quot;</span> <span class="g">href</span><span class="p">=</span><span class="q">&quot;</span><span class="y"></span><span class="q">&quot;</span>&gt;</div>
<div class="code" style="left:0;top:561.6px">    &lt;/<span class="p">head</span>&gt;</div>
<div class="code" style="left:0;top:604.8px">    &lt;<span class="p">body</span>&gt;</div>
<div class="code" style="left:0;top:648.0px">        <span class="c">&lt;!--[if lt IE 7]&gt;</span></div>
<div class="code" style="left:0;top:691.2px">            <span class="c">&lt;p class=&quot;browsehappy&quot;&gt;You are using an &lt;strong&gt;outdated&lt;/strong&gt; browser. Please &lt;a href=&quot;#&quot;&gt;upgrade your browser&lt;/a&gt; to improve your experience.&lt;/p&gt;</span></div>
<div class="code" style="left:0;top:734.4px">        <span class="c">&lt;![endif]--&gt;</span></div>
<div class="code" style="left:0;top:820.8px">        &lt;<span class="p">script</span> <span class="g">src</span><span class="p">=</span><span class="q">&quot;</span><span class="y"></span><span class="q">&quot;</span> <span class="g">async</span> <span class="g">defer</span>&gt;&lt;/<span class="p">script</span>&gt;</div>
<div class="code" style="left:0;top:864.0px">    &lt;/<span class="p">body</span>&gt;</div>
<div class="code" style="left:0;top:907.2px">&lt;/<span class="p">html</span>&gt;</div>
</div></div>
<div class="r" style="left:3315.0px;top:1009.0px;width:1.2px;height:10.0px;background:#59648F;"></div>
<div class="r" style="left:3315.0px;top:686.0px;width:1.2px;height:4.0px;background:#59648F;"></div>
<div class="r" style="left:3315.0px;top:725.0px;width:1.2px;height:4.0px;background:#59648F;"></div>
</div><div id="winborder"></div>
</body></html>
